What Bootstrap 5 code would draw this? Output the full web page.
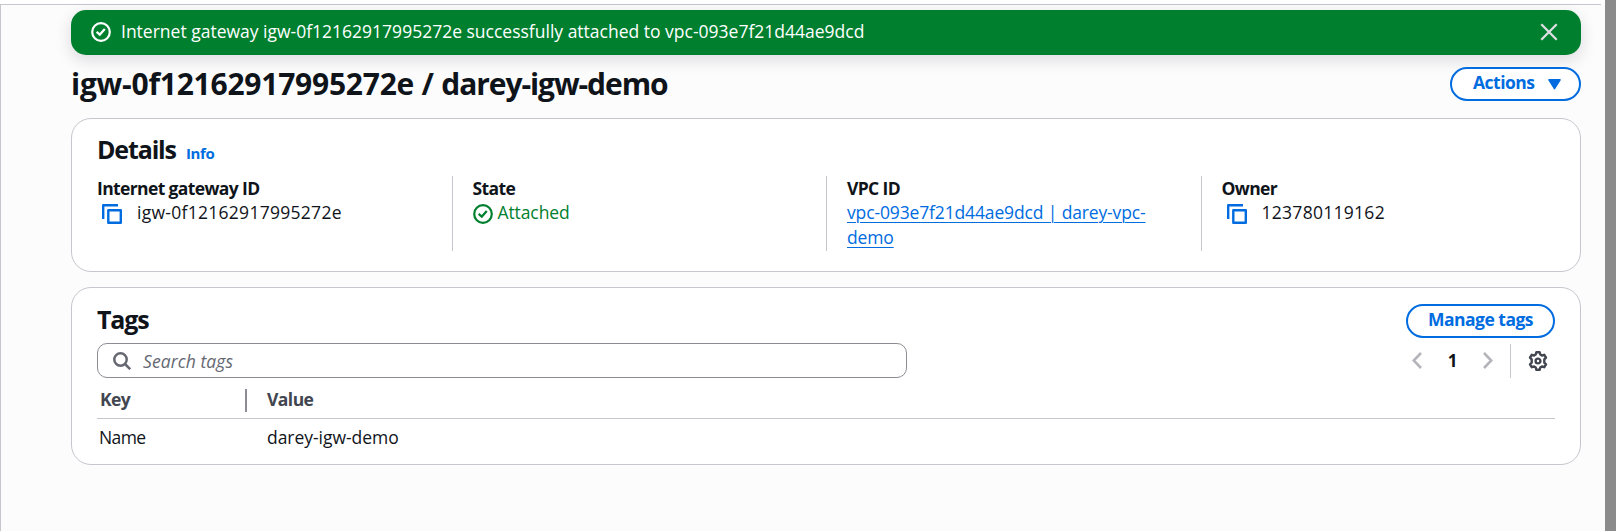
<!DOCTYPE html>
<html lang="en">
<head>
<meta charset="utf-8">
<meta name="viewport" content="width=device-width, initial-scale=1">
<title>Internet gateway</title>
<link href="https://cdn.jsdelivr.net/npm/bootstrap@5.3.0/dist/css/bootstrap.min.css" rel="stylesheet">
<style>
  :root { --ink:#0f141a; --blue:#006ce0; --green:#00802f; --line:#c6c6cd; }
  body { font-family:"Open Sans","Noto Sans",sans-serif; font-size:17.5px; line-height:25px; color:var(--ink); background:#fff; height:531px; overflow:hidden; }
  svg { display:block; flex:none; }
  .shell { height:531px; padding-top:4px; }
  .page-area { border-top:1px solid var(--line); border-left:1px solid var(--line); background:#fcfcfd; padding:5px 20px 0 70px; width:1601px; }
  .gutter { background:#fcfcfd; width:4px; }
  .scroll-thumb { background:#8b8b8b; width:11px; margin-top:-4px; }
  .flash { height:45px; border-radius:15px; background:var(--green); color:#fff; padding:0 22px 2px 20px; margin-bottom:12px; box-shadow:0 5px 15px 1px rgba(0,7,22,.12); }
  .flash-text { margin-left:10px; }
  .flash .btn-close-x { background:none; border:0; padding:0; color:#dedee3; }
  .page-title { font-size:30px; line-height:33px; font-weight:700; letter-spacing:-.24px; margin:0; }
  .title-name { letter-spacing:-1.08px; }
  .btn-pill { height:34px; border:2px solid var(--blue); border-radius:17px; color:var(--blue); background:#fff; font-size:17.5px; line-height:24px; font-weight:700; padding:0 20px 4px; }
  .btn-actions { width:131px; padding:0 18px 4px 21px; letter-spacing:-.5px; }
  .btn-actions svg { margin-top:4px; }
  .btn-manage { width:149px; letter-spacing:-.5px; padding:0 0 4px; }
  .panel { border:1px solid var(--line); border-radius:20px; background:#fff; padding:0 25px; }
  .panel-details { height:154px; margin-top:17px; }
  .panel-tags { height:178px; margin-top:15px; }
  .panel h2 { font-size:25px; line-height:30px; font-weight:700; letter-spacing:-1.15px; margin:0; }
  .info-link { font-size:15px; font-weight:700; color:var(--blue); text-decoration:none; margin-left:10px; letter-spacing:-.3px; }
  .details-head { padding-top:15px; height:57px; }
  .props { margin:0 -20px; height:75px; }
  .prop { padding:0 20px; border-left:1px solid var(--line); }
  .prop:first-child { border-left-color:transparent; padding-left:19px; }
  .prop-label { font-weight:700; letter-spacing:-.62px; line-height:24px; }
  .prop-value { line-height:25px; }
  .copy-icon { margin:2px 15px 0 5px; }
  .id-text { letter-spacing:.28px; }
  .prop a { color:var(--blue); text-underline-offset:3px; text-decoration-thickness:1px; letter-spacing:-.14px; }
  .ok-state { color:var(--green); gap:5px; letter-spacing:-.1px; }
  .ok-state svg { margin-top:2px; }
  .tags-head { padding-top:16px; height:55px; }
  .search { width:810px; height:35px; border:1px solid #8c8c94; border-radius:10px; padding-left:15px; margin-bottom:1px; }
  .search input { border:0; outline:0; background:none; margin-left:12px; padding:0; font-style:italic; width:600px; height:31px; letter-spacing:.08px; }
  .search input::placeholder { color:#656871; opacity:1; }
  .pager { padding-right:7px; margin-top:-1px; }
  .pager-num { font-size:17px; font-weight:700; width:61px; text-align:center; }
  .vline { width:1px; height:34px; background:var(--line); margin:0 17px; }
  .tags-grid { display:grid; grid-template-columns:150px 1fr; }
  .tags-grid .th-cell { height:40px; padding:8px 0 0 3px; color:#424650; font-weight:700; letter-spacing:-.55px; border-bottom:1px solid var(--line); }
  .tags-grid .td-cell { padding:6px 0 0 2px; letter-spacing:-.6px; }
  .tags-grid .val { padding-left:20px; }
  .tags-grid .td-cell.val { letter-spacing:-.04px; }
  .resizer { width:2px; height:23px; background:#8c8c94; margin-top:2px; }
</style>
</head>
<body>
<div class="shell d-flex">
  <main class="page-area">
    <div class="flash d-flex align-items-center" role="status">
      <svg width="20" height="20" viewBox="0 0 20 20" fill="none" stroke="currentColor" stroke-width="2.2"><circle cx="10" cy="10" r="8.8"/><path d="M5.6 9.8 8.8 12.6 13.8 7"/></svg>
      <span class="flash-text">Internet gateway igw-0f12162917995272e successfully attached to vpc-093e7f21d44ae9dcd</span>
      <button class="btn-close-x ms-auto" aria-label="Dismiss"><svg width="20" height="20" viewBox="0 0 20 20" fill="none" stroke="currentColor" stroke-width="2.3"><path d="M2.3 2.3 17.7 17.7M17.7 2.3 2.3 17.7"/></svg></button>
    </div>

    <div class="d-flex justify-content-between">
      <h1 class="page-title">igw-0f12162917995272e / <span class="title-name">darey-igw-demo</span></h1>
      <button class="btn btn-pill btn-actions d-flex align-items-center justify-content-between">Actions
        <svg width="13" height="11" viewBox="0 0 13 11"><path d="M1 .9h11L6.5 9.6z" fill="currentColor" stroke="currentColor" stroke-width="1.6" stroke-linejoin="round"/></svg>
      </button>
    </div>

    <section class="panel panel-details">
      <div class="details-head d-flex align-items-baseline"><h2>Details</h2><a class="info-link" href="#">Info</a></div>
      <div class="props row gx-0">
        <div class="prop col-3">
          <div class="prop-label">Internet gateway ID</div>
          <div class="prop-value d-flex align-items-center">
            <svg class="copy-icon" width="20" height="20" viewBox="0 0 20 20" fill="none" stroke="#006ce0" stroke-width="2.4" stroke-linejoin="round"><path d="M1.2 15V1.2H16"/><path d="M6.3 6.3h12.5v12.5H6.3z"/></svg>
            <span class="id-text">igw-0f12162917995272e</span>
          </div>
        </div>
        <div class="prop col-3">
          <div class="prop-label">State</div>
          <div class="prop-value ok-state d-flex align-items-center">
            <svg width="20" height="20" viewBox="0 0 20 20" fill="none" stroke="currentColor" stroke-width="2.2"><circle cx="10" cy="10" r="8.8"/><path d="M5.6 9.8 8.8 12.6 13.8 7"/></svg>
            <span>Attached</span>
          </div>
        </div>
        <div class="prop col-3">
          <div class="prop-label">VPC ID</div>
          <a href="#">vpc-093e7f21d44ae9dcd | darey-vpc-<br>demo</a>
        </div>
        <div class="prop col-3">
          <div class="prop-label">Owner</div>
          <div class="prop-value d-flex align-items-center">
            <svg class="copy-icon" width="20" height="20" viewBox="0 0 20 20" fill="none" stroke="#006ce0" stroke-width="2.4" stroke-linejoin="round"><path d="M1.2 15V1.2H16"/><path d="M6.3 6.3h12.5v12.5H6.3z"/></svg>
            <span class="id-text">123780119162</span>
          </div>
        </div>
      </div>
    </section>

    <section class="panel panel-tags">
      <div class="tags-head d-flex justify-content-between align-items-start">
        <h2>Tags</h2>
        <button class="btn btn-pill btn-manage">Manage tags</button>
      </div>
      <div class="d-flex justify-content-between align-items-center">
        <div class="search d-flex align-items-center">
          <svg width="18" height="18" viewBox="0 0 18 18" fill="none" stroke="#656871" stroke-width="2.5"><circle cx="7.5" cy="7.5" r="6.2"/><path d="m12 12 5.2 5.2"/></svg>
          <input type="text" placeholder="Search tags" aria-label="Search tags">
        </div>
        <div class="pager d-flex align-items-center">
          <svg width="10" height="17" viewBox="0 0 10 17" fill="none" stroke="#b4b4bb" stroke-width="2.6"><path d="M9 1 1.7 8.5 9 16"/></svg>
          <span class="pager-num">1</span>
          <svg width="10" height="17" viewBox="0 0 10 17" fill="none" stroke="#b4b4bb" stroke-width="2.6"><path d="m1 1 7.3 7.5L1 16"/></svg>
          <span class="vline"></span>
          <svg width="20" height="20" viewBox="0 0 20 20" fill="none" stroke="#424650" stroke-width="2.4" stroke-linejoin="round"><path d="M8.4 1.2h3.2l.7 2.3 1.6 1 2.4-.7 1.7 2.8-1.7 1.8v3.2l1.7 1.8-1.7 2.8-2.4-.7-1.6 1-.7 2.3H8.4l-.7-2.3-1.6-1-2.4.7L2 13.4l1.7-1.8V8.4L2 6.6l1.7-2.8 2.4.7 1.6-1z"/><circle cx="10" cy="10" r="2.4"/></svg>
        </div>
      </div>
      <div class="tags-grid">
        <div class="th-cell d-flex justify-content-between">Key<span class="resizer"></span></div>
        <div class="th-cell val">Value</div>
        <div class="td-cell">Name</div>
        <div class="td-cell val">darey-igw-demo</div>
      </div>
    </section>
  </main>
  <div class="gutter"></div>
  <div class="scroll-thumb"></div>
</div>
<script src="https://cdn.jsdelivr.net/npm/bootstrap@5.3.0/dist/js/bootstrap.bundle.min.js"></script>
</body>
</html>
